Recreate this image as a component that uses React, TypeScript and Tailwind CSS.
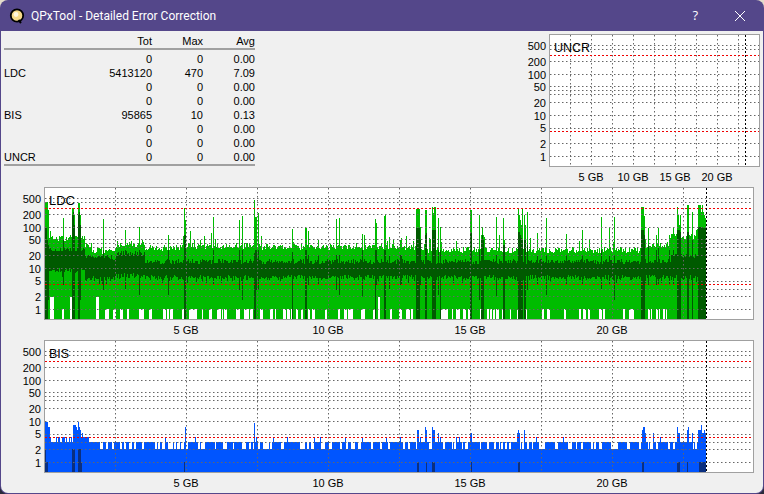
const font = '"Liberation Sans", Arial, sans-serif'

// one plot: same y spacing everywhere, offsets from the frame top
const gridOffsets = [11.5, 15.5, 27.5, 40.5, 52.5, 56.5, 60.5, 68.5, 81.5, 94.5, 102.5, 109.5, 122.5]
const yTicks: [string, number][] = [
  ['500', 12], ['200', 28], ['100', 41], ['50', 53], ['20', 69], ['10', 82], ['5', 94], ['2', 110], ['1', 123],
]

const rows = [
  ['', '0', '0', '0.00'],
  ['LDC', '5413120', '470', '7.09'],
  ['', '0', '0', '0.00'],
  ['', '0', '0', '0.00'],
  ['BIS', '95865', '10', '0.13'],
  ['', '0', '0', '0.00'],
  ['', '0', '0', '0.00'],
  ['UNCR', '0', '0', '0.00'],
]

let seed = 12345
const rnd = () => {
  seed = (seed * 1664525 + 1013904223) % 4294967296
  return seed / 4294967296
}

const LDC_BOTTOM = 319
// x, light top, dark top, dark bottom
const ldcSpikes: [number, number, number, number][] = [
  [45, 202, 228, 319], [46, 202, 228, 319], [47, 202, 240, 319], [48, 210, 245, 300],
  [63, 218, 240, 285], [72, 208, 215, 319], [73, 208, 212, 319], [74, 215, 225, 319],
  [78, 203, 215, 319], [79, 203, 212, 319], [80, 215, 225, 300], [103, 219, 250, 290],
  [125, 230, 250, 290], [139, 227, 250, 295], [168, 235, 250, 295], [184, 208, 235, 319], [185, 220, 235, 319],
  [213, 217, 250, 285], [239, 220, 250, 290], [242, 216, 250, 300], [254, 200, 253, 319], [255, 217, 250, 319],
  [256, 217, 250, 290], [258, 213, 250, 290], [292, 229, 252, 319], [305, 228, 250, 319], [306, 228, 250, 319],
  [308, 231, 255, 285], [318, 240, 255, 285], [336, 219, 255, 290], [339, 218, 255, 295], [362, 234, 250, 297],
  [375, 219, 250, 319], [376, 223, 250, 285], [384, 216, 250, 319], [385, 215, 250, 319], [389, 237, 255, 290],
  [400, 240, 255, 285], [401, 238, 255, 285], [416, 209, 228, 319], [417, 209, 228, 319], [418, 209, 228, 319],
  [419, 209, 228, 319], [420, 227, 240, 285], [425, 210, 235, 319], [426, 210, 233, 319], [432, 207, 230, 319],
  [433, 213, 230, 319], [434, 207, 230, 319], [435, 207, 230, 319], [438, 218, 250, 295], [440, 227, 250, 319],
  [470, 210, 233, 319], [471, 210, 233, 319], [479, 215, 250, 300], [481, 235, 240, 319], [482, 227, 235, 319],
  [483, 235, 240, 319], [496, 217, 255, 296], [503, 218, 245, 319], [504, 240, 245, 319], [518, 209, 232, 319],
  [519, 215, 232, 319], [520, 220, 235, 319], [521, 225, 238, 319], [522, 209, 240, 319], [524, 215, 240, 319],
  [525, 225, 240, 319], [527, 212, 245, 290], [537, 233, 255, 285], [546, 218, 255, 295], [566, 234, 255, 285],
  [582, 230, 255, 285], [601, 217, 250, 290], [609, 227, 255, 285], [614, 217, 255, 300], [641, 207, 230, 319],
  [642, 207, 230, 319], [643, 207, 230, 319], [644, 216, 235, 319], [648, 228, 245, 285], [656, 235, 250, 285],
  [658, 228, 248, 285], [669, 235, 250, 285], [673, 228, 250, 285], [677, 207, 230, 319], [678, 215, 230, 319],
  [679, 225, 230, 319], [680, 215, 232, 319], [687, 205, 232, 319], [688, 205, 232, 319], [692, 212, 240, 319],
  [698, 205, 227, 319], [699, 205, 227, 319], [700, 205, 227, 319], [701, 212, 227, 319], [702, 205, 227, 319],
  [703, 212, 228, 319], [704, 215, 228, 319], [705, 218, 228, 319],
]

function ldcPaths() {
  const spikes = new Map(ldcSpikes.map((s) => [s[0], s]))
  let light = ''
  let dark = ''
  let gapEnd = 0
  let tallGapEnd = 0
  for (let x = 45; x <= 705; x++) {
    let top = 249
    if (x < 85) top = 238
    else if (x < 92) top = 245
    else if (x < 116) top = 251
    else if (x < 145) top = 244
    else if (x < 185) top = 248
    else if (x < 260) top = 246
    else if (x < 420) top = 247
    else if (x < 640) top = 250
    else if (x < 670) top = 245
    else top = 236 - (x > 695 ? 6 : 0)
    top += Math.round(rnd() * 6) - 3
    if (rnd() < 0.08) top -= Math.round(rnd() * 14)

    let bandTop = 261
    let bandBottom = 277
    if (x < 85) {
      bandTop = 249
      bandBottom = 270
    } else if (x < 116) {
      bandTop = 257
      bandBottom = 278
    } else if (x < 145) {
      bandTop = 253
      bandBottom = 275
    } else if (x > 670) {
      bandTop = 255
    }
    bandTop += Math.round(rnd() * 5) - 2
    bandBottom += Math.round(rnd() * 5) - 2
    if (rnd() < 0.05) bandBottom += 4

    const spike = spikes.get(x)
    const solid = spike && spike[3] === LDC_BOTTOM
    let bottom = LDC_BOTTOM
    if (!solid) {
      const leftSide = x < 140
      if (x > tallGapEnd && rnd() < (leftSide ? 0.07 : 0.002)) tallGapEnd = x + Math.round(rnd() * (leftSide ? 4 : 1))
      if (x > gapEnd && rnd() < (leftSide ? 0.1 : 0.16)) gapEnd = x + Math.round(rnd() * (x < 260 ? 3 : 2))
      if (x <= tallGapEnd) bottom = 297
      else if (x <= gapEnd && x < 690) bottom = 309
    }
    light += `M${x + 0.5} ${spike ? Math.min(spike[1], top) : top}V${bottom}`
    dark += `M${x + 0.5} ${bandTop}V${bandBottom}`
    if (spike) dark += `M${x + 0.5} ${spike[2]}V${spike[3]}`
  }
  return { light, dark }
}

const bisPeaks: [number, number][] = [
  [45, 422], [46, 422], [47, 422], [48, 427], [49, 427], [73, 425], [74, 425], [75, 425], [76, 427], [77, 430], [78, 422],
  [79, 427], [80, 430], [82, 433], [185, 427], [254, 423], [273, 437], [417, 430], [418, 430], [425, 427], [426, 430],
  [432, 427], [433, 430], [434, 430], [438, 433], [440, 437], [470, 433], [471, 433], [517, 433], [518, 430], [519, 433],
  [524, 430], [642, 430], [643, 427], [644, 427], [645, 433], [653, 433], [677, 427], [678, 433], [679, 433], [687, 430],
  [688, 427], [692, 433], [698, 430], [699, 430], [700, 430], [701, 425], [702, 433], [703, 433], [704, 430], [705, 433],
]
const bisDark: [number, number, number][] = [
  [45, 449, 472], [46, 462, 472], [47, 462, 472], [72, 449, 472], [73, 449, 472], [74, 449, 472], [78, 449, 472],
  [79, 449, 472], [80, 449, 472], [81, 462, 472], [184, 462, 472], [417, 462, 472], [418, 462, 472], [426, 462, 472],
  [432, 462, 472], [433, 462, 472], [434, 462, 472], [471, 462, 472], [518, 462, 472], [519, 462, 472], [642, 462, 472],
  [643, 462, 472], [677, 462, 472], [678, 462, 472], [679, 462, 472], [687, 462, 472], [699, 462, 472], [700, 462, 472],
  [701, 462, 472], [702, 462, 472], [703, 462, 472], [704, 462, 472], [705, 462, 472],
]

function bisPaths() {
  const peaks = new Map(bisPeaks)
  let blue = ''
  let gapEnd = 0
  for (let x = 45; x <= 705; x++) {
    let top = 442
    const pGap = x < 95 ? 0 : x > 640 ? 0.12 : 0.2
    if (x > gapEnd && rnd() < pGap) gapEnd = x + Math.round(rnd() * 2)
    if (x <= gapEnd) top = 449
    if (x < 90) top = rnd() < 0.55 ? 437 : 442
    else if (rnd() < 0.05 && x > 100 && top === 442) top = 437
    blue += `M${x + 0.5} ${peaks.get(x) ?? top}V472`
  }
  const dark = bisDark.map(([x, a, b]) => `M${x + 0.5} ${a}V${b}`).join('')
  return { blue, dark }
}

const ldc = ldcPaths()
const bis = bisPaths()

function Plot({
  label, left, right, top, step, offset, marks, width, viewX, labelSize, fullGrid = true, children,
}: {
  label: string
  left: number
  right: number
  top: number
  step: number
  offset: number
  marks: [string, number][]
  width: number
  viewX: number
  labelSize: number
  fullGrid?: boolean
  children?: React.ReactNode
}) {
  const bottom = top + 132
  const verticals: number[] = []
  for (let x = offset; x < right - 8; x += step) verticals.push(x)
  const black = left + (706 - 44) * (step / 71)
  const lines = fullGrid ? gridOffsets : gridOffsets.filter((o) => o !== 102.5)
  return (
    <svg width={width} height={153} viewBox={`${viewX} ${top} ${width} 153`} className="block shrink-0" style={{ fontFamily: font }}>
      <rect x={left + 0.5} y={top + 0.5} width={right - left} height={132} fill="#fff" />
      <g shapeRendering="crispEdges">{children}</g>
      {lines.map((o) => (
        <line key={o} x1={left + 1} x2={right} y1={top + o} y2={top + o} stroke="#666" strokeDasharray="1.5 2.5" />
      ))}
      {verticals.map((x) => (
        <line key={x} x1={x} x2={x} y1={top + 1} y2={bottom} stroke="#666" strokeDasharray="1.5 2.5" />
      ))}
      <g shapeRendering="crispEdges">
        <line x1={left + 1} x2={right} y1={top + 21.5} y2={top + 21.5} stroke="#f00000" strokeDasharray="2 2" />
        <line x1={left + 1} x2={right} y1={top + 97.5} y2={top + 97.5} stroke="#f00000" strokeDasharray="2 2" />
        <line x1={black + 0.5} x2={black + 0.5} y1={top + 1} y2={bottom} stroke="#000" strokeDasharray="2 2" />
        <rect x={left + 0.5} y={top + 0.5} width={right - left} height={132} fill="none" stroke="#a0a0a0" />
      </g>
      <text x={left + 5} y={top + 17.5} fontSize={labelSize} fill="#000">{label}</text>
      {yTicks.map(([t, o]) => (
        <text key={t} x={left - 3} y={top + o + 4} fontSize={11} textAnchor="end" fill="#000">{t}</text>
      ))}
      {marks.map(([t, x]) => (
        <text key={t} x={x} y={bottom + 15} fontSize={11} textAnchor="middle" fill="#000">{t}</text>
      ))}
    </svg>
  )
}

export default function App() {
  return (
    <div className="h-[494px] w-[764px] overflow-hidden bg-gradient-to-b from-[#e4dccb] from-50% to-[#2a2a3a] to-50%">
      <div className="flex h-full w-full flex-col overflow-hidden rounded-[8px] bg-[#54478a]">
        <div className="flex h-[31px] shrink-0 items-center text-white">
          <svg width="16" height="16" viewBox="0 0 16 16" className="ml-[9px]">
            <circle cx="8" cy="7.5" r="6.2" fill="#f7d98a" stroke="#000" strokeWidth="1.8" />
            <circle cx="7" cy="6.5" r="2.4" fill="#fff6e0" />
            <path d="M9.5 12l2.5 3" stroke="#000" strokeWidth="2" />
          </svg>
          <span className="ml-[6px] text-[12px] leading-none" style={{ fontFamily: 'Roboto, sans-serif' }}>
            QPxTool - Detailed Error Correction
          </span>
          <span className="ml-auto text-[13px] leading-none" style={{ fontFamily: '"Open Sans", sans-serif' }}>?</span>
          <svg width="12" height="12" viewBox="0 0 12 12" className="ml-[36px] mr-[18px]">
            <path d="M1 1l10 10M11 1L1 11" stroke="#fff" strokeWidth="1" />
          </svg>
        </div>
        <div className="mx-px mb-px flex flex-1 flex-col rounded-b-[7px] bg-[#f0f0f0] text-[11px] text-black" style={{ fontFamily: font }}>
          <div className="flex h-[156px] justify-between pt-[3px]">
            <div className="ml-[3px] w-[251px]">
              <div className="grid h-[14px] grid-cols-[1fr_50px_51px_52px] items-center text-right leading-none">
                <span />
                <span>Tot</span>
                <span>Max</span>
                <span>Avg</span>
              </div>
              <div className="border-y-2 border-[#a0a0a0] pt-[2px]">
                {rows.map((r, i) => (
                  <div key={i} className="grid h-[14px] grid-cols-[1fr_50px_51px_52px] items-center text-right leading-none">
                    <span className="text-left">{r[0]}</span>
                    <span>{r[1]}</span>
                    <span>{r[2]}</span>
                    <span>{r[3]}</span>
                  </div>
                ))}
              </div>
            </div>
            <div className="mr-[2px]">
              <Plot
                label="UNCR"
                left={549}
                right={759}
                top={34}
                step={21}
                offset={570.5}
                width={237}
                viewX={524}
                labelSize={12.5}
                fullGrid={false}
                marks={[['5 GB', 591], ['10 GB', 633], ['15 GB', 675], ['20 GB', 717]]}
              />
            </div>
          </div>
          <Plot
            label="LDC"
            left={44}
            right={753}
            top={187}
            step={71}
            offset={115.5}
            width={754}
            viewX={1}
            labelSize={13}
            marks={[['5 GB', 186], ['10 GB', 328], ['15 GB', 470], ['20 GB', 612]]}
          >
            <path d={ldc.light} stroke="#00bc00" fill="none" />
            <path d={ldc.dark} stroke="#005a00" fill="none" />
          </Plot>
          <Plot
            label="BIS"
            left={44}
            right={753}
            top={340}
            step={71}
            offset={115.5}
            width={754}
            viewX={1}
            labelSize={12.5}
            marks={[['5 GB', 186], ['10 GB', 328], ['15 GB', 470], ['20 GB', 612]]}
          >
            <path d={bis.blue} stroke="#0055ff" fill="none" />
            <path d={bis.dark} stroke="#0a2f80" fill="none" />
          </Plot>
        </div>
      </div>
    </div>
  )
}
